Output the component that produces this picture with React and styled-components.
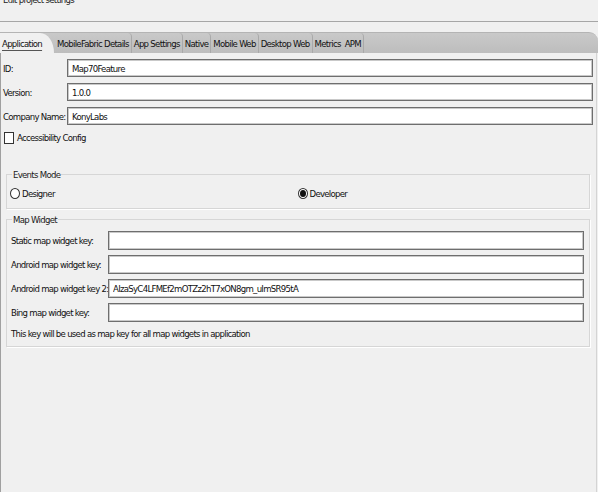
import React from 'react';
import styled, { createGlobalStyle } from 'styled-components';

const GlobalStyle = createGlobalStyle`
  html, body {
    margin: 0;
    padding: 0;
    background: #f0f0f0;
  }
  body {
    font-family: "DejaVu Sans Condensed", "Liberation Sans", Arial, sans-serif;
    font-size: 9.5px;
    letter-spacing: -0.7px;
    color: #111;
  }
`;

const tabs = [
  'Application',
  'MobileFabric Details',
  'App Settings',
  'Native',
  'Mobile Web',
  'Desktop Web',
  'Metrics',
  'APM',
];

const mapKeys = [
  { label: 'Static map widget key:', value: '' },
  { label: 'Android map widget key:', value: '' },
  { label: 'Android map widget key 2:', value: 'AIzaSyC4LFMEf2mOTZz2hT7xON8gm_uImSR95tA' },
  { label: 'Bing map widget key:', value: '' },
];

const App = () => {
  return (
    <Window>
      <GlobalStyle />
      <TitleBar>
        <Title>Edit project settings</Title>
      </TitleBar>
      <TabBar>
        {tabs.map((t, i) => (
          <Tab key={t} active={i === 0} plain={t === 'Metrics'}>
            <TabLabel active={i === 0}>{t}</TabLabel>
          </Tab>
        ))}
      </TabBar>
      <Pane>
        <FormGrid>
          <Label>ID:</Label>
          <Input defaultValue="Map70Feature" />
          <Label>Version:</Label>
          <Input defaultValue="1.0.0" />
          <Label>Company Name:</Label>
          <Input defaultValue="KonyLabs" />
        </FormGrid>
        <CheckRow>
          <CheckBox />
          <span>Accessibility Config</span>
        </CheckRow>

        <Group top={25}>
          <Legend>Events Mode</Legend>
          <RadioRow>
            <RadioItem>
              <Radio />
              <span>Designer</span>
            </RadioItem>
            <RadioItem>
              <Radio checked />
              <span>Developer</span>
            </RadioItem>
          </RadioRow>
        </Group>

        <Group top={5}>
          <Legend>Map Widget</Legend>
          <KeyGrid>
            {mapKeys.map((k) => (
              <React.Fragment key={k.label}>
                <Label>{k.label}</Label>
                <Input defaultValue={k.value} />
              </React.Fragment>
            ))}
          </KeyGrid>
          <Note>This key will be used as map key for all map widgets in application</Note>
        </Group>
      </Pane>
    </Window>
  );
};

export default App;

const Window = styled.div`
  width: 598px;
  height: 492px;
  display: flex;
  flex-direction: column;
  overflow: hidden;
  background: #f0f0f0;
`;

const TitleBar = styled.div`
  height: 22px;
  border-bottom: 1px solid #a6a6a6;
  overflow: hidden;
  box-sizing: border-box;
`;

const Title = styled.div`
  margin-top: -6px;
  padding-left: 3px;
  line-height: 12px;
  color: #222;
`;

const TabBar = styled.div`
  margin-top: 10px;
  height: 21px;
  display: flex;
  align-items: stretch;
  background: linear-gradient(#c9c9c9, #bdbdbd);
  border-top-right-radius: 9px;
  border-top: 1px solid #b4b4b4;
  box-sizing: border-box;
`;

const Tab = styled.div`
  display: flex;
  align-items: center;
  padding: ${({ active }) => (active ? '0 12px 0 2px' : '0 2px')};
  border-right: ${({ active, plain }) => (active || plain ? 'none' : '1px solid #a9a9a9')};
  border-top-right-radius: ${({ active }) => (active ? '14px 20px' : '4px')};
  background: ${({ active }) => (active ? '#f0f0f0' : 'transparent')};
  margin-right: ${({ active }) => (active ? '1px' : '0')};
`;

const TabLabel = styled.span`
  color: #111;
  white-space: nowrap;
  text-decoration: ${({ active }) => (active ? 'underline' : 'none')};
  text-underline-offset: 3px;
  text-decoration-color: #555;
`;

const Pane = styled.div`
  flex: 1;
  border-left: 1px solid #a0a0a0;
  border-right: 1px solid #d4d4d4;
  margin-right: 1px;
  padding: 6px 3px 0 2px;
  display: flex;
  flex-direction: column;
`;

const FormGrid = styled.div`
  display: grid;
  grid-template-columns: 64px 1fr;
  grid-auto-rows: 18px;
  row-gap: 6px;
  align-items: center;
`;

const Label = styled.span`
  white-space: nowrap;
`;

const Input = styled.input`
  box-sizing: border-box;
  height: 100%;
  width: 100%;
  margin: 0;
  border: 1px solid #6e6e6e;
  box-shadow: inset 0 0 0 1px #c9c9c9;
  background: #fff;
  padding: 0 4px;
  font: inherit;
  letter-spacing: inherit;
  color: #111;
  outline: none;
`;

const CheckRow = styled.label`
  display: flex;
  align-items: center;
  gap: 3px;
  margin-top: 6px;
  height: 13px;
`;

const CheckBox = styled.span`
  box-sizing: border-box;
  width: 10px;
  height: 12px;
  border: 1px solid #333;
  background: #fff;
  margin-left: 1px;
`;

const Group = styled.fieldset`
  margin: ${({ top }) => top}px 3px 0 3px;
  padding: 0 4px 7px 3px;
  border: 1px solid #d6d6d6;
  box-shadow: 1px 1px 0 #fff;
  min-width: 0;
`;

const Legend = styled.legend`
  padding: 0 1px;
  margin-left: 2px;
  color: #1a1a1a;
`;

const RadioRow = styled.div`
  display: grid;
  grid-template-columns: 1fr 1fr;
  height: 16px;
  align-items: center;
  margin-top: 5px;
`;

const RadioItem = styled.label`
  display: flex;
  align-items: center;
  gap: 2px;
`;

const Radio = styled.span`
  box-sizing: border-box;
  width: 10px;
  height: 11px;
  border-radius: 50%;
  border: 1px solid #333;
  background: #fff;
  display: flex;
  align-items: center;
  justify-content: center;

  &::after {
    content: '';
    display: ${({ checked }) => (checked ? 'block' : 'none')};
    width: 6px;
    height: 7px;
    border-radius: 50%;
    background: #111;
  }
`;

const KeyGrid = styled.div`
  display: grid;
  grid-template-columns: 97px 1fr;
  grid-auto-rows: 19px;
  row-gap: 5px;
  align-items: center;
  margin-top: 6px;
  padding-left: 1px;
  padding-right: 1px;
`;

const Note = styled.div`
  margin-top: 6px;
  padding-left: 1px;
`;
